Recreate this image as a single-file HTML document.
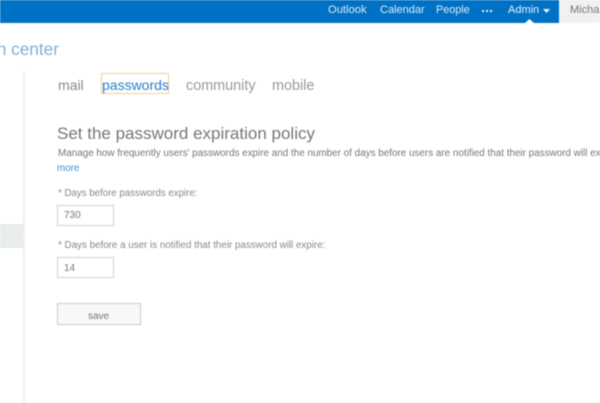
<!DOCTYPE html>
<html><head><meta charset="utf-8"><style>
html,body{margin:0;padding:0;background:#fff}
#p{position:relative;width:600px;height:403px;overflow:hidden;background:#fff;font-family:"Liberation Sans",sans-serif;filter:blur(.45px)}
.t{position:absolute;white-space:nowrap;line-height:1}
.b{position:absolute;box-sizing:border-box}
</style></head><body><div id="p">
<div class="b" style="left:0;top:0;width:600px;height:23px;background:#0072c6"></div>
<div class="b" style="left:559px;top:0;width:41px;height:23px;background:#f1f1f1"></div>
<div class="t" style="left:328px;top:5px;font-size:11.2px;color:#dbe9f6">Outlook</div>
<div class="t" style="left:380px;top:5px;font-size:11px;color:#dbe9f6">Calendar</div>
<div class="t" style="left:436px;top:5px;font-size:10.8px;color:#dbe9f6">People</div>
<div class="b" style="left:482px;top:10px;width:2px;height:2px;background:#e6f0fa"></div>
<div class="b" style="left:486px;top:10px;width:2px;height:2px;background:#e6f0fa"></div>
<div class="b" style="left:490px;top:10px;width:2px;height:2px;background:#e6f0fa"></div>
<div class="t" style="left:508px;top:5px;font-size:11px;color:#e6f0fa">Admin</div>
<svg style="position:absolute;left:543px;top:9px" width="7" height="4"><path d="M0 0H7L3.5 4Z" fill="#f0f6fc"/></svg>
<svg style="position:absolute;left:525px;top:19px" width="9" height="4"><path d="M0 4L4.5 0L9 4Z" fill="#fff"/></svg>
<div class="t" style="left:570px;top:5px;font-size:11px;color:#777">Michael</div>

<div class="t" style="left:-7px;top:41px;font-size:17.2px;color:#7fb2dc">in center</div>

<div class="b" style="left:23px;top:72px;width:2px;height:331px;background:#f0f0f0"></div>
<div class="b" style="left:0;top:224px;width:23px;height:24px;background:#e9ecec"></div>

<div class="t" style="left:58px;top:78px;font-size:14px;color:#8a8a8a">mail</div>
<div class="b" style="left:101px;top:73px;width:68px;height:21px;border:1px solid #f3cf8f;border-radius:1px"></div>
<div class="t" style="left:102px;top:78px;font-size:14px;color:#2a7fc9">passwords</div>
<div class="t" style="left:186px;top:79px;font-size:14.4px;color:#9a9a9a">community</div>
<div class="t" style="left:272px;top:79px;font-size:14.4px;color:#9a9a9a">mobile</div>

<div class="t" style="left:57px;top:125px;font-size:17px;color:#777">Set the password expiration policy</div>
<div class="t" style="left:58px;top:149px;font-size:9.9px;color:#777">Manage how frequently users' passwords expire and the number of days before users are notified that their password will expire.</div>
<div class="t" style="left:57px;top:164px;font-size:9.8px;color:#3d8fd1">more</div>

<div class="t" style="left:58px;top:189px;font-size:9.7px;color:#888">* Days before passwords expire:</div>
<div class="b" style="left:57px;top:205px;width:57px;height:21px;border:1px solid #d0d0d0;background:#fff"></div>
<div class="t" style="left:64px;top:211px;font-size:10px;color:#777">730</div>

<div class="t" style="left:58px;top:241px;font-size:9.8px;color:#888">* Days before a user is notified that their password will expire:</div>
<div class="b" style="left:57px;top:257px;width:57px;height:21px;border:1px solid #d0d0d0;background:#fff"></div>
<div class="t" style="left:64px;top:264px;font-size:10px;color:#777">14</div>

<div class="b" style="left:57px;top:303px;width:84px;height:22px;border:1px solid #c8ccce;background:#f8f8f8"></div>
<div class="t" style="left:88px;top:312px;font-size:10px;color:#777">save</div>
</div></body></html>
